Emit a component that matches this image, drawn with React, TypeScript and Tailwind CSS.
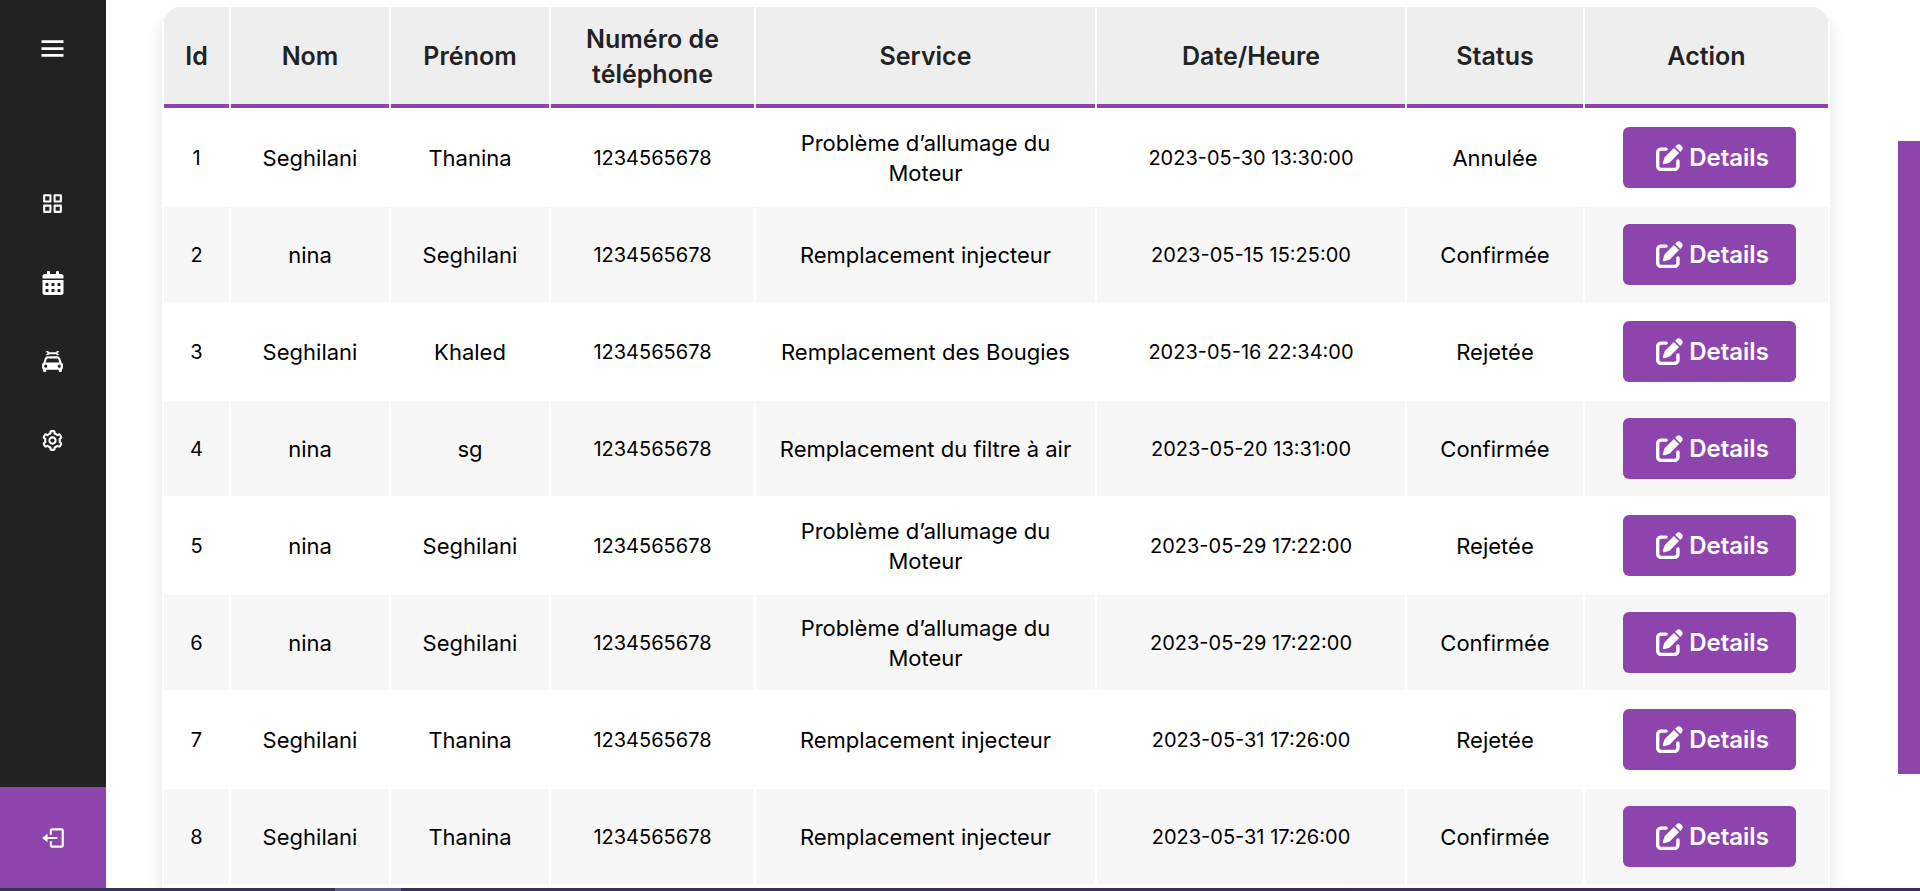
import { BiCog, BiGridAlt, BiLogOut, BiMenu, BiSolidCarMechanic } from 'react-icons/bi';
import { FaCalendarAlt } from 'react-icons/fa';
import { FaPenToSquare } from 'react-icons/fa6';

type Appointment = {
  id: number;
  nom: string;
  prenom: string;
  telephone: string;
  service: string;
  date: string;
  status: string;
};

const appointments: Appointment[] = [
  { id: 1, nom: 'Seghilani', prenom: 'Thanina', telephone: '1234565678', service: 'Problème d’allumage du Moteur', date: '2023-05-30 13:30:00', status: 'Annulée' },
  { id: 2, nom: 'nina', prenom: 'Seghilani', telephone: '1234565678', service: 'Remplacement injecteur', date: '2023-05-15 15:25:00', status: 'Confirmée' },
  { id: 3, nom: 'Seghilani', prenom: 'Khaled', telephone: '1234565678', service: 'Remplacement des Bougies', date: '2023-05-16 22:34:00', status: 'Rejetée' },
  { id: 4, nom: 'nina', prenom: 'sg', telephone: '1234565678', service: 'Remplacement du filtre à air', date: '2023-05-20 13:31:00', status: 'Confirmée' },
  { id: 5, nom: 'nina', prenom: 'Seghilani', telephone: '1234565678', service: 'Problème d’allumage du Moteur', date: '2023-05-29 17:22:00', status: 'Rejetée' },
  { id: 6, nom: 'nina', prenom: 'Seghilani', telephone: '1234565678', service: 'Problème d’allumage du Moteur', date: '2023-05-29 17:22:00', status: 'Confirmée' },
  { id: 7, nom: 'Seghilani', prenom: 'Thanina', telephone: '1234565678', service: 'Remplacement injecteur', date: '2023-05-31 17:26:00', status: 'Rejetée' },
  { id: 8, nom: 'Seghilani', prenom: 'Thanina', telephone: '1234565678', service: 'Remplacement injecteur', date: '2023-05-31 17:26:00', status: 'Confirmée' },
];

const columns = [
  { label: 'Id', width: 'w-[65px]' },
  { label: 'Nom', width: 'w-[158px]' },
  { label: 'Prénom', width: 'w-[158px]' },
  { label: 'Numéro de téléphone', width: 'w-[203px]' },
  { label: 'Service', width: 'w-[339px]' },
  { label: 'Date/Heure', width: 'w-[308px]' },
  { label: 'Status', width: 'w-[176px]' },
  { label: 'Action', width: 'w-[243px]' },
];

const links = [
  { label: 'Tableau de bord', icon: <BiGridAlt className="size-[25px]" /> },
  { label: 'Rendez-vous', icon: <FaCalendarAlt className="size-6" /> },
  { label: 'Véhicules', icon: <BiSolidCarMechanic className="size-[25px]" /> },
  { label: 'Paramètres', icon: <BiCog className="size-[25px]" /> },
];

function Sidebar() {
  return (
    <aside className="flex w-[106px] shrink-0 flex-col bg-[#222] text-white">
      <button type="button" aria-label="Menu" className="flex h-[97px] items-center justify-center pr-px">
        <BiMenu className="size-[33px]" />
      </button>
      <nav className="mt-[67px] flex flex-col">
        {links.map((link) => (
          <a key={link.label} href="#" aria-label={link.label} className="flex h-[79px] items-center justify-center pr-px">
            {link.icon}
          </a>
        ))}
      </nav>
      <a href="#" aria-label="Déconnexion" className="mt-auto flex h-[101px] items-center justify-center bg-[#8e44ad] pr-px">
        <BiLogOut className="size-[26px]" />
      </a>
    </aside>
  );
}

function AppointmentTable() {
  return (
    <table className="w-full table-fixed border-separate border-spacing-[2px] text-center text-[22px] leading-[30px]">
      <thead>
        <tr className="h-[101px]">
          {columns.map((column) => (
            <th
              key={column.label}
              scope="col"
              className={`${column.width} border-b-4 border-[#8e44ad] bg-[#eee] px-4 pt-[2px] text-[25px] leading-[35px] font-semibold text-[#222]`}
            >
              {column.label}
            </th>
          ))}
        </tr>
      </thead>
      <tbody>
        {appointments.map((a) => (
          <tr key={a.id} className="h-[95px] odd:bg-white even:bg-[#f7f7f7]">
            <td className="text-[20px]">{a.id}</td>
            <td>{a.nom}</td>
            <td>{a.prenom}</td>
            <td className="text-[20px]">{a.telephone}</td>
            <td className="px-4">{a.service}</td>
            <td className="text-[20px]">{a.date}</td>
            <td>{a.status}</td>
            <td className="pl-[6px]">
              <button
                type="button"
                className="inline-flex h-[61px] w-[173px] items-center justify-center gap-[6px] rounded-md bg-[#8e44ad] pl-[6px] align-middle text-[24px] font-semibold text-white"
              >
                <FaPenToSquare className="size-[27px] shrink-0" />
                Details
              </button>
            </td>
          </tr>
        ))}
      </tbody>
    </table>
  );
}

export default function App() {
  return (
    <div className="flex h-screen flex-col overflow-hidden bg-white font-[Inter,sans-serif] text-black">
      <div className="flex min-h-0 flex-1">
        <Sidebar />
        <main className="flex min-w-0 flex-1 flex-col overflow-hidden pt-[5px] pr-[68px] pl-14">
          <section className="flex-1 overflow-hidden rounded-t-[24px] bg-white shadow-[0_8px_16px_rgba(0,0,0,0.12)]">
            <AppointmentTable />
          </section>
        </main>
        <div className="w-[22px] shrink-0 pt-[141px]" aria-hidden="true">
          <div className="h-[633px] bg-[#8e44ad]" />
        </div>
      </div>
      <div className="flex h-[3px] shrink-0 bg-linear-to-r from-[#383355] to-[#43285c]">
        <div className="ml-[335px] w-[66px] bg-[#5f5c92]" />
      </div>
    </div>
  );
}
